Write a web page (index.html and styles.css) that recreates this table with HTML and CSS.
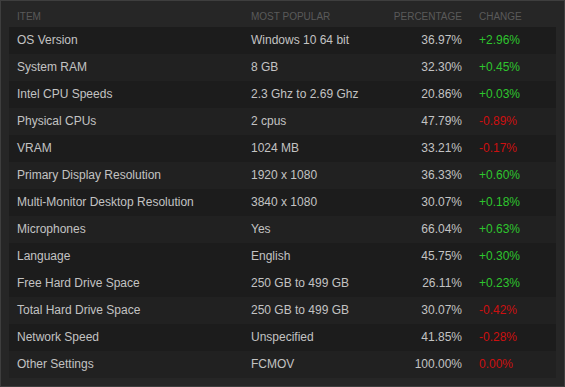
FILE: index.html
```html
<!DOCTYPE html>
<html>
<head>
<meta charset="utf-8">
<link rel="stylesheet" href="styles.css">
</head>
<body>
<div class="panel">
  <div class="row head">
    <div>ITEM</div><div>MOST POPULAR</div><div class="num">PERCENTAGE</div><div class="chg">CHANGE</div>
  </div>
  <div class="row dark"><div>OS Version</div><div>Windows 10 64 bit</div><div class="num">36.97%</div><div class="chg up">+2.96%</div></div>
  <div class="row"><div>System RAM</div><div>8 GB</div><div class="num">32.30%</div><div class="chg up">+0.45%</div></div>
  <div class="row dark"><div>Intel CPU Speeds</div><div>2.3 Ghz to 2.69 Ghz</div><div class="num">20.86%</div><div class="chg up">+0.03%</div></div>
  <div class="row"><div>Physical CPUs</div><div>2 cpus</div><div class="num">47.79%</div><div class="chg down">-0.89%</div></div>
  <div class="row dark"><div>VRAM</div><div>1024 MB</div><div class="num">33.21%</div><div class="chg down">-0.17%</div></div>
  <div class="row"><div>Primary Display Resolution</div><div>1920 x 1080</div><div class="num">36.33%</div><div class="chg up">+0.60%</div></div>
  <div class="row dark"><div>Multi-Monitor Desktop Resolution</div><div>3840 x 1080</div><div class="num">30.07%</div><div class="chg up">+0.18%</div></div>
  <div class="row"><div>Microphones</div><div>Yes</div><div class="num">66.04%</div><div class="chg up">+0.63%</div></div>
  <div class="row dark"><div>Language</div><div>English</div><div class="num">45.75%</div><div class="chg up">+0.30%</div></div>
  <div class="row dark"><div>Free Hard Drive Space</div><div>250 GB to 499 GB</div><div class="num">26.11%</div><div class="chg up">+0.23%</div></div>
  <div class="row"><div>Total Hard Drive Space</div><div>250 GB to 499 GB</div><div class="num">30.07%</div><div class="chg down">-0.42%</div></div>
  <div class="row dark"><div>Network Speed</div><div>Unspecified</div><div class="num">41.85%</div><div class="chg down">-0.28%</div></div>
  <div class="row"><div>Other Settings</div><div>FCMOV</div><div class="num">100.00%</div><div class="chg down">0.00%</div></div>
</div>
</body>
</html>
```
FILE: styles.css
```css
html, body {
  margin: 0;
  padding: 0;
  background: #262626;
}
.panel {
  width: 565px;
  height: 387px;
  box-sizing: border-box;
  border: 1px solid #3e3e3e;
  background: #262626;
  padding: 0 8px 8px 8px;
  font-family: "Liberation Sans", Arial, sans-serif;
  font-size: 12px;
  color: #c3c3c3;
}
.row {
  display: grid;
  grid-template-columns: 234px 131px 80px 94px;
  padding-left: 8px;
  height: 27px;
  line-height: 27px;
  background: #212121;
  white-space: nowrap;
}
.row.dark {
  background: #1c1c1c;
}
.row.head {
  background: transparent;
  height: 16px;
  line-height: 12px;
  padding-top: 10px;
  font-size: 10px;
  color: #5a5a5a;
}
.num {
  text-align: right;
}
.chg {
  padding-left: 17px;
}
.up {
  color: #2ec52e;
}
.down {
  color: #cc1010;
}
```
